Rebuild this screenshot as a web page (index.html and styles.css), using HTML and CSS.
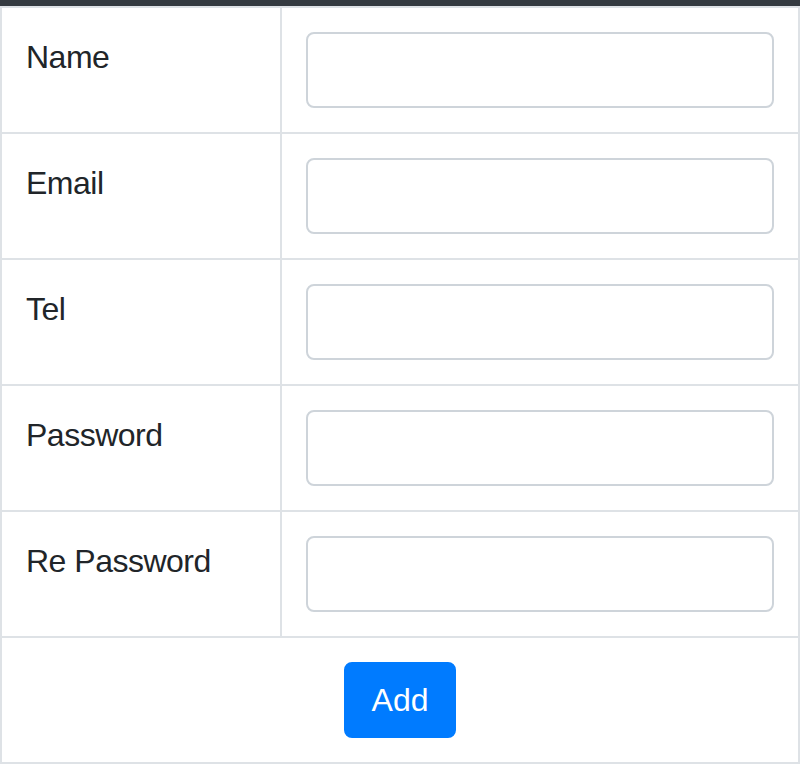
FILE: index.html
```html
<!DOCTYPE html>
<html>
<head>
<meta charset="utf-8">
<link rel="stylesheet" href="styles.css">
</head>
<body>
<div class="topbar"></div>
<table class="form-table">
  <colgroup><col class="col-label"><col></colgroup>
  <tr><td class="label">Name</td><td><input class="field" type="text"></td></tr>
  <tr><td class="label">Email</td><td><input class="field" type="text"></td></tr>
  <tr><td class="label">Tel</td><td><input class="field" type="text"></td></tr>
  <tr><td class="label">Password</td><td><input class="field" type="password"></td></tr>
  <tr><td class="label">Re Password</td><td><input class="field" type="password"></td></tr>
  <tr><td class="actions" colspan="2"><button class="btn-add" type="button">Add</button></td></tr>
</table>
</body>
</html>
```

FILE: styles.css
```css
html, body {
  margin: 0;
  padding: 0;
  background: #fff;
}
body {
  font-family: "Liberation Sans", Arial, sans-serif;
  font-size: 32px;
  line-height: 1.5;
  color: #212529;
}
.topbar {
  height: 6px;
  background: #343a40;
}
.form-table {
  width: 800px;
  border-collapse: collapse;
  table-layout: fixed;
}
.col-label {
  width: 280px;
}
.form-table td {
  border: 2px solid #dee2e6;
  padding: 24px;
  vertical-align: top;
}
.form-table td.label {
  padding-top: 25px;
  letter-spacing: -0.5px;
}
.field {
  display: block;
  box-sizing: border-box;
  width: 100%;
  height: 76px;
  margin: 0;
  padding: 12px 24px;
  border: 2px solid #ced4da;
  border-radius: 8px;
  background: #fff;
  font: inherit;
  outline: none;
}
.actions {
  text-align: center;
}
.btn-add {
  display: inline-block;
  margin: 0;
  padding: 12px 26px;
  height: 76px;
  border: 2px solid #007bff;
  border-radius: 8px;
  background: #007bff;
  color: #fff;
  font: inherit;
  line-height: 48px;
  vertical-align: top;
}
```
